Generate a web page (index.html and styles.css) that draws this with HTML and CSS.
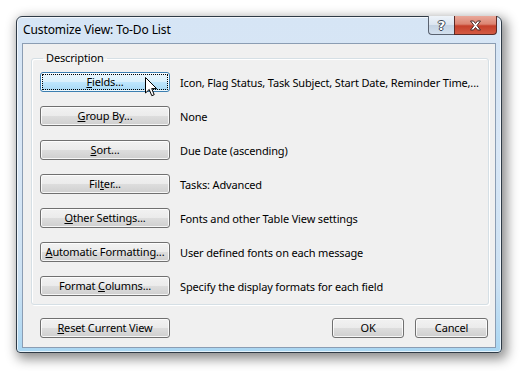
FILE: index.html
```html
<!DOCTYPE html>
<html lang="en">
<head>
  <meta charset="UTF-8" />
  <title>Customize View: To-Do List</title>
  <link rel="stylesheet" href="styles.css">
</head>
<body>
  <!-- Ventana de diálogo estilo Vista -->
  <div class="window">
    <div class="titlebar">
      <span class="title">Customize View: To-Do List</span>
      <div class="caption-btns">
        <span class="cap help">?</span>
        <span class="cap close">
          <svg width="13" height="11" viewBox="0 0 13 11">
            <path d="M1.5,1 L4.5,1 L6.5,3.5 L8.5,1 L11.5,1 L8,5.5 L11.5,10 L8.5,10 L6.5,7.5 L4.5,10 L1.5,10 L5,5.5 Z"
                  fill="#fff" stroke="#4a2a28" stroke-width="1" stroke-linejoin="round" />
          </svg>
        </span>
      </div>
    </div>

    <div class="client">
      <fieldset class="group">
        <legend>Description</legend>
        <div class="row">
          <button class="btn focus"><u>F</u>ields...</button>
          <span class="desc">Icon, Flag Status, Task Subject, Start Date, Reminder Time,...</span>
          <!-- Puntero del ratón sobre el botón -->
          <svg class="cursor" width="13" height="20" viewBox="0 0 13 20">
            <path d="M0.5,0.5 L0.5,16 L4.2,12.5 L6.8,18.7 L9.2,17.7 L6.7,11.6 L11.6,11.6 Z"
                  fill="#fff" stroke="#000" stroke-width="1" stroke-linejoin="miter" />
          </svg>
        </div>
        <div class="row">
          <button class="btn"><u>G</u>roup By...</button>
          <span class="desc">None</span>
        </div>
        <div class="row">
          <button class="btn"><u>S</u>ort...</button>
          <span class="desc">Due Date (ascending)</span>
        </div>
        <div class="row">
          <button class="btn">Fil<u>t</u>er...</button>
          <span class="desc">Tasks: Advanced</span>
        </div>
        <div class="row">
          <button class="btn"><u>O</u>ther Settings...</button>
          <span class="desc">Fonts and other Table View settings</span>
        </div>
        <div class="row">
          <button class="btn"><u>A</u>utomatic Formatting...</button>
          <span class="desc">User defined fonts on each message</span>
        </div>
        <div class="row">
          <button class="btn">Format <u>C</u>olumns...</button>
          <span class="desc">Specify the display formats for each field</span>
        </div>
      </fieldset>

      <div class="footer">
        <button class="btn"><u>R</u>eset Current View</button>
        <div class="spacer"></div>
        <button class="btn ok">OK</button>
        <button class="btn cancel">Cancel</button>
      </div>
    </div>
  </div>
</body>
</html>
```

FILE: styles.css
```css
* {
  margin: 0;
  padding: 0;
  box-sizing: border-box;
}
html, body {
  width: 100%;
  height: 100%;
  overflow: hidden;
  background: #fff;
  font-family: "Noto Sans", "Open Sans", sans-serif;
  font-size: 11px;
  letter-spacing: -0.15px;
  color: #000;
}
body {
  padding: 16px 0 0 16px;
}

/* Marco de la ventana (vidrio azul claro) */
.window {
  width: 486px;
  height: 337px;
  display: flex;
  flex-direction: column;
  border: 1px solid #2f3b47;
  border-radius: 6px 6px 4px 4px;
  background: linear-gradient(to bottom, #d6e5f5 0%, #d9e7f6 40%, #cce1f3 80%, #a9d6f2 100%);
  box-shadow: 3px 4px 12px 2px rgba(0, 0, 0, 0.45), inset 0 0 0 1px rgba(255, 255, 255, 0.7);
}

/* Barra de título */
.titlebar {
  height: 26px;
  display: flex;
  align-items: flex-start;
}
.title {
  flex: 1;
  padding: 5px 0 0 6px;
  line-height: 16px;
  font-size: 12px;
  letter-spacing: -0.1px;
  color: #000;
}
.caption-btns {
  display: flex;
  margin: -1px 4px 0 0;
}
.cap {
  height: 19px;
  display: flex;
  align-items: center;
  justify-content: center;
  border: 1px solid #5a6270;
  border-top: none;
}
.help {
  width: 26px;
  border-radius: 0 0 0 4px;
  border-right: none;
  background: linear-gradient(to bottom, #eef3f9 0%, #dbe5f0 50%, #c4d2e2 51%, #d3e0ee 100%);
  color: #fff;
  font-family: "DejaVu Sans", sans-serif;
  font-weight: bold;
  font-size: 13px;
  text-shadow: 1px 0 0 #3b4350, -1px 0 0 #3b4350, 0 1px 0 #3b4350, 0 -1px 0 #3b4350;
}
.close {
  width: 43px;
  border-radius: 0 0 4px 0;
  border-color: #5b2a26;
  background: linear-gradient(to bottom, #e9a99b 0%, #dc8472 45%, #c5402b 55%, #d35a43 100%);
}

/* Área cliente */
.client {
  flex: 1;
  margin: 0 5px 4px;
  border: 1px solid #8b9db3;
  background: #f0f0f0;
  padding: 6px 6px 0 8px;
  display: flex;
  flex-direction: column;
}

/* Marco de grupo "Description" */
.group {
  min-width: 0;
  border: 1px solid #d5dfe5;
  border-radius: 3px;
  box-shadow: inset 1px 1px 0 #fff, 1px 1px 0 #fff;
  padding: 6px 8px 8px 8px;
  display: flex;
  flex-direction: column;
  gap: 14px;
}
.group legend {
  margin-left: 3px;
  padding: 0 3px;
  line-height: 16px;
}

.row {
  position: relative;
  display: flex;
  align-items: center;
  gap: 10px;
}
.desc {
  white-space: nowrap;
}

/* Botones estilo Vista */
.btn {
  width: 130px;
  height: 20px;
  border: 1px solid #707070;
  border-radius: 3px;
  background: linear-gradient(to bottom, #f2f2f2 0%, #ebebeb 50%, #dddddd 51%, #cfcfcf 100%);
  box-shadow: inset 0 0 0 1px rgba(255, 255, 255, 0.8);
  font-family: inherit;
  font-size: 11px;
  letter-spacing: -0.15px;
  color: #000;
  line-height: 16px;
}
.btn.focus {
  border-color: #3c7fb1;
  background: linear-gradient(to bottom, #eaf6fd 0%, #d9f0fc 50%, #bee6fd 51%, #a7d9f5 100%);
  outline: 1px dotted #000;
  outline-offset: -3px;
}
.cursor {
  position: absolute;
  left: 105px;
  top: 5px;
}

.footer {
  display: flex;
  margin-top: 13px;
  padding: 0 1px 0 9px;
}
.spacer {
  flex: 1;
}
.btn.ok {
  width: 72px;
  margin-right: 11px;
}
.btn.cancel {
  width: 73px;
}
```
